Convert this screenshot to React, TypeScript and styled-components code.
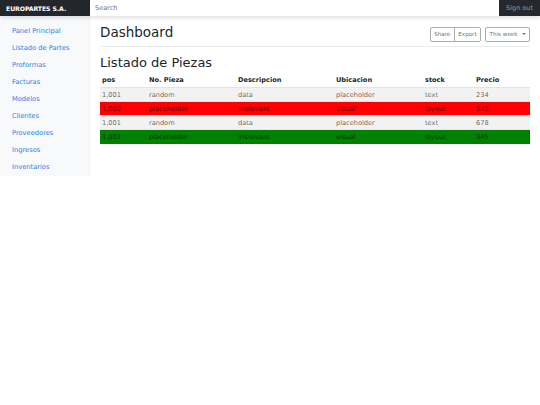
import React from 'react';
import styled, { createGlobalStyle } from 'styled-components';

const GlobalStyle = createGlobalStyle`
  body {
    margin: 0;
    background: #fff;
    color: #212529;
    font-family: "DejaVu Sans", "Liberation Sans", sans-serif;
  }
`;

const Navbar = styled.nav`
  position: relative;
  z-index: 2;
  display: flex;
  height: 16px;
  background: #343a40;
  box-shadow: 0 2px 4px rgba(0, 0, 0, 0.12);
`;

const Brand = styled.a`
  flex: 0 0 90px;
  box-sizing: border-box;
  display: flex;
  align-items: center;
  padding-left: 6px;
  background: #23272b;
  color: #fff;
  font-size: 6.2px;
  font-weight: bold;
  letter-spacing: -0.1px;
`;

const Search = styled.input`
  flex: 1;
  min-width: 0;
  height: 16px;
  box-sizing: border-box;
  border: none;
  outline: none;
  padding: 0 5px;
  font-family: inherit;
  font-size: 6.5px;
  color: #495057;

  &::placeholder {
    color: #6c757d;
  }
`;

const SignOut = styled.a`
  flex: 0 0 auto;
  display: flex;
  align-items: center;
  padding: 0 7px;
  background: #25292d;
  color: rgba(255, 255, 255, 0.5);
  font-size: 6.5px;
`;

const Body = styled.div`
  display: flex;
  align-items: flex-start;
`;

const Sidebar = styled.aside`
  flex: 0 0 90px;
  box-sizing: border-box;
  padding: 7px 0 0;
  background: #f8f9fa;
  box-shadow: inset -1px 0 0 rgba(0, 0, 0, 0.02);
`;

const NavLink = styled.a`
  display: block;
  height: 17px;
  line-height: 17px;
  padding-left: 12px;
  color: #2f7fe6;
  font-size: 6.7px;
`;

const Main = styled.main`
  flex: 1;
  min-width: 0;
  padding: 0 10px;
`;

const Header = styled.div`
  display: flex;
  justify-content: space-between;
  align-items: center;
  padding: 8px 0 2px;
  margin-bottom: 8px;
  border-bottom: 1px solid #e9ecef;
`;

const Title = styled.h1`
  margin: 0 0 4px;
  font-size: 13.5px;
  font-weight: normal;
  line-height: 16px;
`;

const Toolbar = styled.div`
  display: flex;
  gap: 4px;
`;

const Group = styled.div`
  display: flex;
  border: 1px solid #a9aeb3;
  border-radius: 2px;
`;

const Button = styled.button<{ $divider?: boolean }>`
  display: flex;
  align-items: center;
  gap: 4px;
  height: 13px;
  box-sizing: border-box;
  padding: 0 3.5px;
  background: transparent;
  border: none;
  border-left: ${(p) => (p.$divider ? '1px solid #a9aeb3' : 'none')};
  color: #6c757d;
  font-family: inherit;
  font-size: 5.6px;
`;

const Caret = styled.span`
  width: 0;
  height: 0;
  border-left: 2px solid transparent;
  border-right: 2px solid transparent;
  border-top: 2px solid #6c757d;
`;

const Subtitle = styled.h2`
  margin: 0 0 1px;
  font-size: 13px;
  font-weight: normal;
  line-height: 16px;
`;

const Table = styled.table`
  width: 100%;
  border-collapse: collapse;
  table-layout: fixed;
  font-size: 6.6px;
`;

const Th = styled.th`
  height: 15px;
  padding: 0 2px;
  text-align: left;
  font-weight: bold;
  color: #212529;
  border-bottom: 1px solid #e2e5e8;
`;

const Row = styled.tr<{ $tone: 'striped' | 'plain' | 'red' | 'green' }>`
  background: ${(p) =>
    p.$tone === 'red' ? '#ff0000' : p.$tone === 'green' ? '#008000' : p.$tone === 'striped' ? '#f2f2f2' : '#fff'};
`;

const Td = styled.td`
  height: 14px;
  box-sizing: border-box;
  padding: 0 2px;
  border-top: 1px solid #e6e8ea;
  color: rgba(0, 0, 0, 0.62);
  white-space: nowrap;
`;

const links = [
  'Panel Principal',
  'Listado de Partes',
  'Proformas',
  'Facturas',
  'Modelos',
  'Clientes',
  'Proveedores',
  'Ingresos',
  'Inventarios',
];

const columns = [
  { label: 'pos', width: 47 },
  { label: 'No. Pieza', width: 89 },
  { label: 'Descripcion', width: 98 },
  { label: 'Ubicacion', width: 89 },
  { label: 'stock', width: 51 },
  { label: 'Precio', width: 56 },
];

const rows: { tone: 'striped' | 'red' | 'green'; cells: string[] }[] = [
  { tone: 'striped', cells: ['1,001', 'random', 'data', 'placeholder', 'text', '234'] },
  { tone: 'red', cells: ['1,002', 'placeholder', 'irrelevant', 'visual', 'layout', '545'] },
  { tone: 'striped', cells: ['1,001', 'random', 'data', 'placeholder', 'text', '678'] },
  { tone: 'green', cells: ['1,002', 'placeholder', 'irrelevant', 'visual', 'layout', '345'] },
];

export default function App() {
  return (
    <>
      <GlobalStyle />
      <Navbar>
        <Brand>EUROPARTES S.A.</Brand>
        <Search placeholder="Search" aria-label="Search" />
        <SignOut>Sign out</SignOut>
      </Navbar>
      <Body>
        <Sidebar>
          {links.map((l) => (
            <NavLink key={l}>{l}</NavLink>
          ))}
        </Sidebar>
        <Main>
          <Header>
            <Title>Dashboard</Title>
            <Toolbar>
              <Group>
                <Button>Share</Button>
                <Button $divider>Export</Button>
              </Group>
              <Group>
                <Button>
                  This week
                  <Caret />
                </Button>
              </Group>
            </Toolbar>
          </Header>
          <Subtitle>Listado de Piezas</Subtitle>
          <Table>
            <colgroup>
              {columns.map((c) => (
                <col key={c.label} style={{ width: c.width }} />
              ))}
            </colgroup>
            <thead>
              <tr>
                {columns.map((c) => (
                  <Th key={c.label}>{c.label}</Th>
                ))}
              </tr>
            </thead>
            <tbody>
              {rows.map((r, i) => (
                <Row key={i} $tone={r.tone}>
                  {r.cells.map((c, j) => (
                    <Td key={j}>{c}</Td>
                  ))}
                </Row>
              ))}
            </tbody>
          </Table>
        </Main>
      </Body>
    </>
  );
}
